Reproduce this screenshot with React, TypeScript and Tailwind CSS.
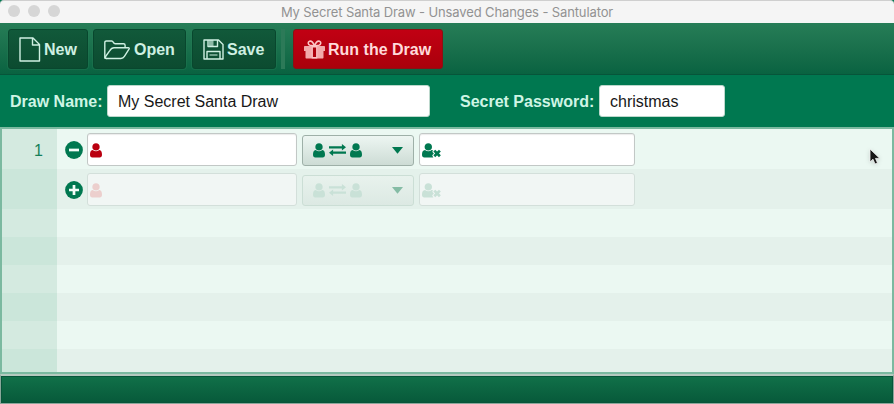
import React from "react";

function Person({ className = "" }: { className?: string }) {
  return (
    <svg viewBox="0 0 12 15" className={`h-[15px] w-3 shrink-0 ${className}`} fill="currentColor">
      <path d="M6 .3c2.200 0 3.700 1.500 3.700 3.700S8.200 7.600 6 7.600 2.300 6.200 2.300 4 3.800.3 6 .3z" />
      <path d="M2.700 7.100c1.900 1.600 4.700 1.600 6.600 0 2.100.2 2.700 2.200 2.700 4.700 0 1.700-.9 2.700-2.300 2.700H2.300C.9 14.500 0 13.500 0 11.800 0 9.300.6 7.300 2.700 7.100z" />
    </svg>
  );
}

function PersonRemove() {
  return (
    <svg viewBox="0 0 19 15" className="h-[15px] w-[19px] shrink-0" fill="currentColor">
      <path d="M6.300.3c2.200 0 3.700 1.600 3.700 3.700S8.500 7.600 6.300 7.600 2.600 6.100 2.600 4 4.100.3 6.300.3z" />
      <path d="M3 7.100c1.900 1.600 4.700 1.600 6.600 0 .8.100 1.200.3 1.600.6L10.200 8.800l1.700 1.600-1.700 1.800 1.100 2.200c-.3.100-.6.100-1 .1H2.300C.9 14.500 0 13.500 0 11.800 0 9 .9 7.200 3 7.100z" />
      <path d="M12.300 7.600l5.600 5.600M17.900 7.600l-5.600 5.600" stroke="currentColor" strokeWidth="2.700" />
    </svg>
  );
}

function Exchange() {
  return (
    <svg viewBox="0 0 17 12" className="h-3 w-[17px] shrink-0" fill="currentColor">
      <path d="M0 2.200h12.900V0L17 3.300l-4.100 3.200V4.500H0zM17 7.500H4.100V5.500L0 8.700 4.100 12V9.800H17z" />
    </svg>
  );
}

function NewIcon() {
  return (
    <svg viewBox="0 0 22 25" className="h-[25px] w-[22px]" fill="none" stroke="currentColor" strokeWidth="1.400" strokeLinejoin="round">
      <path d="M1 1h13l6.500 6.500V24H1zM13.500 1v7h7" />
    </svg>
  );
}

function OpenIcon() {
  return (
    <svg viewBox="0 0 26 20" className="h-5 w-[26px]" fill="none" stroke="currentColor" strokeWidth="1.400" strokeLinejoin="round">
      <path d="M2.500 18.500C1.400 18.500.8 18 .8 17V2.500C.8 1.500 1.400 1 2.400 1h5.200c1 0 1.300.5 1.800 1.400.4.900.8 1.400 1.800 1.400h8.400c1 0 1.500.6 1.500 1.500v2.500" />
      <path d="M.9 17.500l4.700-6.700C7 8.500 8 7.800 10 7.800h14.300c1 0 1.100.6.700 1.300l-4.600 7.300c-.9 1.500-1.700 2.100-3.500 2.100H2.300c-.8 0-1.500-.4-1.400-1z" />
    </svg>
  );
}

function SaveIcon() {
  return (
    <svg viewBox="0 0 21 21" className="h-[21px] w-[21px]" fill="none" stroke="currentColor" strokeWidth="1.400" strokeLinejoin="round">
      <path d="M1 1h14.500L20 5.500V20H1zM5 1v6.500h9.500V1M4 20v-7.500h13V20" />
      <path d="M6.500 16h8" strokeWidth="1" />
      <path d="M6 1h4.500v6H6z" fill="currentColor" fillOpacity=".65" stroke="none" />
    </svg>
  );
}

function GiftIcon() {
  return (
    <svg viewBox="0 0 21 19" className="h-[19px] w-[21px]">
      <path d="M10.500 6C9 2 7 .8 5.500 1.200 3.700 1.800 3.800 4.800 6 5.300zm0 0c1.500-4 3.500-5.200 5-4.800 1.800.6 1.700 3.600-.5 4.100z" fill="none" stroke="#fbc4c5" strokeWidth="1.600" />
      <path d="M.8 6h19.400c.5 0 .8.300.8.800V11h-1.500v6.500c0 .6-.4 1-1 1h-16c-.6 0-1-.4-1-1V11H0V6.800C0 6.300.3 6 .8 6z" fill="#f2a9ab" />
      <path d="M7.700 6h5.600v12.500H7.700z" fill="#fbc4c5" />
      <path d="M8.900 7.500h3.200V17H8.900z" fill="#ad000d" />
    </svg>
  );
}

function ToolButton({ className, children }: { className: string; children: React.ReactNode }) {
  return (
    <button className={`flex h-10 items-center rounded-[3px] border pt-px text-[16px] font-bold ${className}`}>
      {children}
    </button>
  );
}

const toolStyle = "border-[#08472e] bg-linear-to-b from-[#11593a] to-[#0c4b30] text-[#cff0e2] shadow-[0_0_0_1px_rgba(40,125,86,0.35)]";

function EntryRow({ disabled = false }: { disabled?: boolean }) {
  const field = disabled ? "border-[#d3dfda] bg-[#f1f6f4]" : "border-[#c2c8c6] bg-white shadow-[inset_0_1px_1px_rgba(0,0,0,0.08)]";
  const tone = disabled ? "text-[#c9e1d7]" : "text-[#007850]";
  return (
    <div className={`flex h-10 shrink-0 ${disabled ? "bg-[#e4f1eb]" : "bg-[#ebf8f2]"}`}>
      <div className={`w-[55px] pr-[14px] pt-3 text-right text-[16px] leading-5 text-[#16805a] ${disabled ? "bg-[#cbe6da]" : "bg-[#d4eae0]"}`}>
        {disabled ? "" : "1"}
      </div>
      <div className="flex items-center pl-[7.500px]">
        <svg viewBox="0 0 18 18" className="mt-[2px] h-[18px] w-[18px]" fill="none">
          <circle cx="9" cy="9" r="8.900" fill="#007850" />
          <path d={disabled ? "M4 9h10M9 4v10" : "M4 9h10"} stroke="#f3fcf8" strokeWidth="2.700" />
        </svg>
        <div className={`ml-[4.500px] mt-px flex h-[33px] w-[210px] items-center rounded-[3px] border pl-[2px] pt-px ${field} ${disabled ? "text-[#eccfcd]" : "text-[#ba0010]"}`}>
          <Person />
        </div>
        <div className={`ml-[5px] mt-[2px] flex h-[31px] w-[112px] items-center rounded-[3px] border pl-[10px] ${disabled ? "border-[#cbded5] bg-linear-to-b from-[#e8f2ed] to-[#dce9e3]" : "border-[#9eb0a8] bg-linear-to-b from-[#edf6f2] to-[#cddcd5]"} ${tone}`}>
          <Person />
          <span className="ml-1"><Exchange /></span>
          <Person className="ml-1" />
          <svg viewBox="0 0 11 7" className={`ml-[30px] h-[7px] w-[11px] ${disabled ? "text-[#85bca5]" : ""}`} fill="currentColor">
            <path d="M0 0h11L5.500 6.700z" />
          </svg>
        </div>
        <div className={`ml-[5px] mt-px flex h-[33px] w-[216px] items-center rounded-[3px] border pl-[2px] pt-px ${field} ${tone}`}>
          <PersonRemove />
        </div>
      </div>
    </div>
  );
}

export default function App() {
  return (
    <div className="relative flex h-[404px] w-[894px] flex-col overflow-hidden bg-[#007850] font-['Liberation_Sans',Arial,sans-serif]">
      <header className="relative flex h-[23px] shrink-0 items-center justify-center rounded-t-[4px] border-t border-[#cfcfcf] bg-[#f5f5f5] pt-px font-[Inter,sans-serif] text-[13px] tracking-[-0.120px] text-[#929292]">
        <div className="absolute left-2 top-[4px] flex gap-2">
          <i className="h-3 w-3 rounded-full bg-[#d6d6d6]" />
          <i className="h-3 w-3 rounded-full bg-[#d6d6d6]" />
          <i className="h-3 w-3 rounded-full bg-[#d6d6d6]" />
        </div>
        <span className="whitespace-nowrap">My Secret Santa Draw - Unsaved Changes - Santulator</span>
      </header>

      <nav className="flex h-[52px] shrink-0 items-start border-b border-[#07553a] bg-linear-to-b from-[#267d57] to-[#096341] pl-2 pt-[6px]">
        <ToolButton className={`w-20 pl-[10px] ${toolStyle}`}>
          <NewIcon /><span className="ml-[3px]">New</span>
        </ToolButton>
        <ToolButton className={`ml-[5px] w-[93px] pl-[10px] ${toolStyle}`}>
          <OpenIcon /><span className="ml-[4px]">Open</span>
        </ToolButton>
        <ToolButton className={`ml-[6px] w-[84px] pl-[10px] ${toolStyle}`}>
          <SaveIcon /><span className="ml-[3px]">Save</span>
        </ToolButton>
        <div className="ml-[5px] h-10 w-[4px] bg-[#2c7a58]" />
        <ToolButton className="ml-2 w-[150px] border-[#8b1013] bg-linear-to-b from-[#c10013] to-[#aa000b] pl-[10px] text-[#ffdada]">
          <GiftIcon /><span className="ml-[3px] whitespace-nowrap">Run the Draw</span>
        </ToolButton>
      </nav>

      <form className="flex h-[52px] shrink-0 items-center pl-[10px] text-[16px]">
        <label className="w-[97px] whitespace-nowrap pt-px font-bold text-[#cff5e5]">Draw Name:</label>
        <div className="flex h-8 w-[323px] items-center rounded-[3px] border border-[#bcd8cc] bg-white pl-[10px] pt-px text-[#181818]">My Secret Santa Draw</div>
        <label className="ml-[30px] w-[139px] whitespace-nowrap pt-px font-bold text-[#cff5e5]">Secret Password:</label>
        <div className="flex h-8 w-[126px] items-center rounded-[3px] border border-[#bcd8cc] bg-white pl-[10px] pt-px text-[#181818]">christmas</div>
      </form>

      <main className="flex h-[247px] shrink-0 flex-col overflow-hidden border-2 border-[#7bb9a0]">
        <EntryRow />
        <EntryRow disabled />
        {[0, 1, 2, 3, 4, 5].map((n) => (
          <div key={n} className={`flex h-7 shrink-0 ${n % 2 ? "bg-[#e4f1eb]" : "bg-[#ebf8f2]"}`}>
            <div className={`w-[55px] ${n % 2 ? "bg-[#cbe6da]" : "bg-[#d4eae0]"}`} />
          </div>
        ))}
      </main>
      <footer className="flex-1 border border-t-2 border-[#8aa79a] border-t-[#b5c9bf] bg-linear-to-b from-[#117149] to-[#07593a] shadow-[inset_0_0_0_1px_#07553a]" />

      <svg viewBox="0 0 12 18" className="absolute left-[869px] top-[148px] h-[18px] w-3 drop-shadow-sm">
        <path d="M1 1v13l3-2.800 2 4.800 2.500-1-2-4.600h4.300z" fill="#161616" stroke="#f3f3f3" strokeWidth=".8" />
      </svg>
    </div>
  );
}
